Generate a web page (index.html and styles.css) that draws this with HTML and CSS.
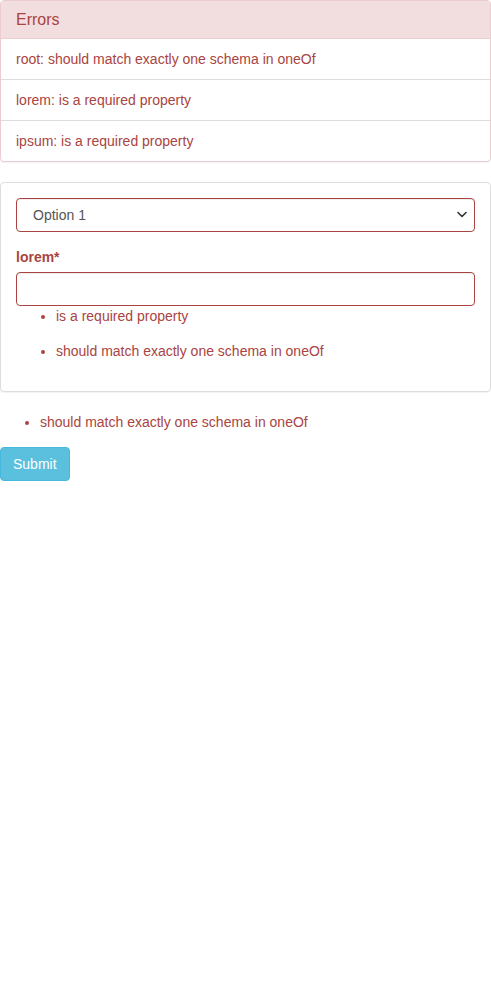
FILE: index.html
```html
<!DOCTYPE html>
<html>
<head>
<meta charset="utf-8">
<link rel="stylesheet" href="styles.css">
</head>
<body>
<div class="panel panel-danger">
  <div class="panel-heading"><h3 class="panel-title">Errors</h3></div>
  <ul class="list-group">
    <li class="list-group-item">root: should match exactly one schema in oneOf</li>
    <li class="list-group-item">lorem: is a required property</li>
    <li class="list-group-item">ipsum: is a required property</li>
  </ul>
</div>
<div class="panel panel-default">
  <div class="panel-body">
    <div class="form-group">
      <div class="select-wrap">
        <select class="form-control select-control">
          <option>Option 1</option>
          <option>Option 2</option>
        </select>
        <svg class="chevron" width="10" height="8" viewBox="0 0 10 8"><path d="M1 1.5 L5 5.5 L9 1.5" fill="none" stroke="#333" stroke-width="1.6" stroke-linecap="round" stroke-linejoin="round"/></svg>
      </div>
    </div>
    <div class="form-group">
      <label class="control-label">lorem*</label>
      <input class="form-control" type="text">
      <ul class="error-detail">
        <li>is a required property</li>
        <li>should match exactly one schema in oneOf</li>
      </ul>
    </div>
  </div>
</div>
<ul class="root-errors">
  <li>should match exactly one schema in oneOf</li>
</ul>
<button class="btn btn-info" type="submit">Submit</button>
</body>
</html>
```
FILE: styles.css
```css
* { box-sizing: border-box; }
body {
  margin: 0;
  font-family: "Liberation Sans", Arial, sans-serif;
  font-size: 14px;
  line-height: 20px;
  color: #333;
  background: #fff;
}
.panel {
  margin-bottom: 20px;
  border: 1px solid transparent;
  border-radius: 4px;
  background: #fff;
  box-shadow: 0 1px 1px rgba(0,0,0,.05);
}
.panel-danger { border-color: #ebccd1; }
.panel-default { border-color: #ddd; }
.panel-heading {
  padding: 10px 15px;
  background: #f2dede;
  color: #a94442;
  border-bottom: 1px solid #ebccd1;
  border-radius: 3px 3px 0 0;
}
.panel-title {
  margin: 0;
  font-size: 16px;
  line-height: 17px;
  font-weight: 500;
}
.list-group { list-style: none; margin: 0; padding: 0; }
.list-group-item {
  padding: 10px 15px;
  border-top: 1px solid #ddd;
  color: #a94442;
}
.list-group-item:first-child { border-top: 0; }
.panel-body { padding: 15px; }
.form-group { margin-bottom: 15px; }
.form-group:last-child { margin-bottom: 0; }
.form-control {
  display: block;
  width: 100%;
  height: 34px;
  padding: 6px 12px;
  font: inherit;
  color: #555;
  background: #fff;
  border: 1px solid #a94442;
  border-radius: 4px;
  box-shadow: inset 0 1px 1px rgba(0,0,0,.075);
  outline: none;
}
.select-wrap { position: relative; }
.select-control {
  -webkit-appearance: none;
  appearance: none;
  padding-left: 16px;
}
.chevron {
  position: absolute;
  right: 8px;
  top: 13px;
  pointer-events: none;
}
.control-label {
  display: block;
  margin-bottom: 5px;
  font-weight: bold;
  color: #a94442;
}
.error-detail {
  margin: 0;
  padding-left: 40px;
  color: #a94442;
}
.error-detail li { margin-bottom: 15px; }
.root-errors {
  margin: 0 0 15px;
  padding-left: 40px;
  color: #a94442;
}
.btn {
  display: inline-block;
  padding: 6px 12px;
  font: inherit;
  line-height: 20px;
  border: 1px solid transparent;
  border-radius: 4px;
  cursor: pointer;
}
.btn-info {
  color: #fff;
  background: #5bc0de;
  border-color: #46b8da;
}
```
